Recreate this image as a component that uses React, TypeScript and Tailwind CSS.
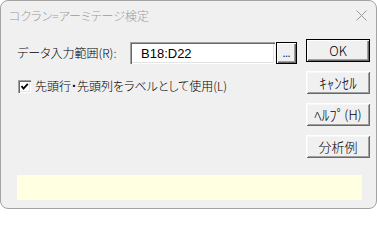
import React from "react";

const jp = "font-['Noto_Sans_CJK_JP',sans-serif] font-light [font-feature-settings:'palt']";

function Btn({ children, def = false }: { children: React.ReactNode; def?: boolean }) {
  return (
    <div
      className={
        "flex h-[23px] w-[64px] items-center justify-center bg-[#f0f0f0] text-[13px] leading-none text-black " +
        jp +
        (def
          ? " border border-black shadow-[inset_1px_1px_#ffffff,inset_-1px_-1px_#696969,inset_-2px_-2px_#a0a0a0]"
          : " shadow-[inset_1px_1px_#ffffff,inset_-1px_-1px_#696969,inset_2px_2px_#f7f7f7,inset_-2px_-2px_#a0a0a0]")
      }
    >
      {children}
    </div>
  );
}

export default function App() {
  return (
    <div className="h-[209px] w-[377px] bg-white">
      <div className="flex h-[209px] w-[377px] flex-col overflow-hidden rounded-[8px] border border-[#a3a3a3] bg-[#f0f0f0]">
        <div className="flex h-[29px] shrink-0 items-center justify-between pl-[8px] pr-[9px]">
          <span className={"text-[12px] leading-none text-[#9a9a9a] " + jp}>コクラン=アーミテージ検定</span>
          <svg width="11" height="11" viewBox="0 0 11 11" className="mb-[1px]">
            <path d="M0.5 0.5 L10.5 10.5 M10.5 0.5 L0.5 10.5" stroke="#9a9a9a" strokeWidth="1" fill="none" />
          </svg>
        </div>
        <div className="flex shrink-0 pl-[16px] pr-[6px] pt-[9px]">
          <div className="flex flex-1 flex-col pt-[3px]">
            <div className="flex h-[22px] items-center">
              <span className={"w-[113px] text-[12px] leading-none text-black " + jp}>データ入力範囲(R):</span>
              <div className="flex h-[22px] w-[145px] items-center bg-white pl-[11px] shadow-[inset_1px_1px_#a0a0a0,inset_2px_2px_#696969,inset_-1px_-1px_#ffffff,inset_-2px_-2px_#e3e3e3]">
                <span className="font-['Liberation_Sans',sans-serif] text-[13px] leading-none text-black">B18:D22</span>
              </div>
              <div className="ml-[1px] flex h-[22px] w-[21px] items-end justify-center border border-black bg-[#f0f0f0] pb-[4px] shadow-[inset_1px_1px_#ffffff,inset_-1px_-1px_#696969,inset_-2px_-2px_#a0a0a0]">
                <span className="font-['Liberation_Sans',sans-serif] text-[9px] font-bold leading-none text-[#1a3a8a]">...</span>
              </div>
            </div>
            <div className="mt-[14px] flex h-[16px] items-center">
              <div className="ml-[1px] flex h-[13px] w-[13px] items-center justify-center bg-white shadow-[inset_1px_1px_#a0a0a0,inset_2px_2px_#696969,inset_-1px_-1px_#ffffff,inset_-2px_-2px_#e3e3e3]">
                <svg width="9" height="9" viewBox="0 0 9 9">
                  <path d="M1.5 4 L3.5 6.5 L7.8 1.8" stroke="#000" strokeWidth="1.8" fill="none" />
                </svg>
              </div>
              <span className={"ml-[4px] text-[12px] leading-none text-black " + jp}>先頭行・先頭列をラベルとして使用(L)</span>
            </div>
          </div>
          <div className="flex w-[64px] flex-col gap-[9px]">
            <Btn def>OK</Btn>
            <Btn>
              <span className="text-[15px]">ｷｬﾝｾﾙ</span>
            </Btn>
            <Btn>
              <span className="text-[15px]">ﾍﾙﾌﾟ</span>
              <span>(H)</span>
            </Btn>
            <Btn>分析例</Btn>
          </div>
        </div>
        <div className="ml-[16px] mt-[17px] h-[25px] w-[345px] shrink-0 bg-[#ffffe1]" />
      </div>
    </div>
  );
}
